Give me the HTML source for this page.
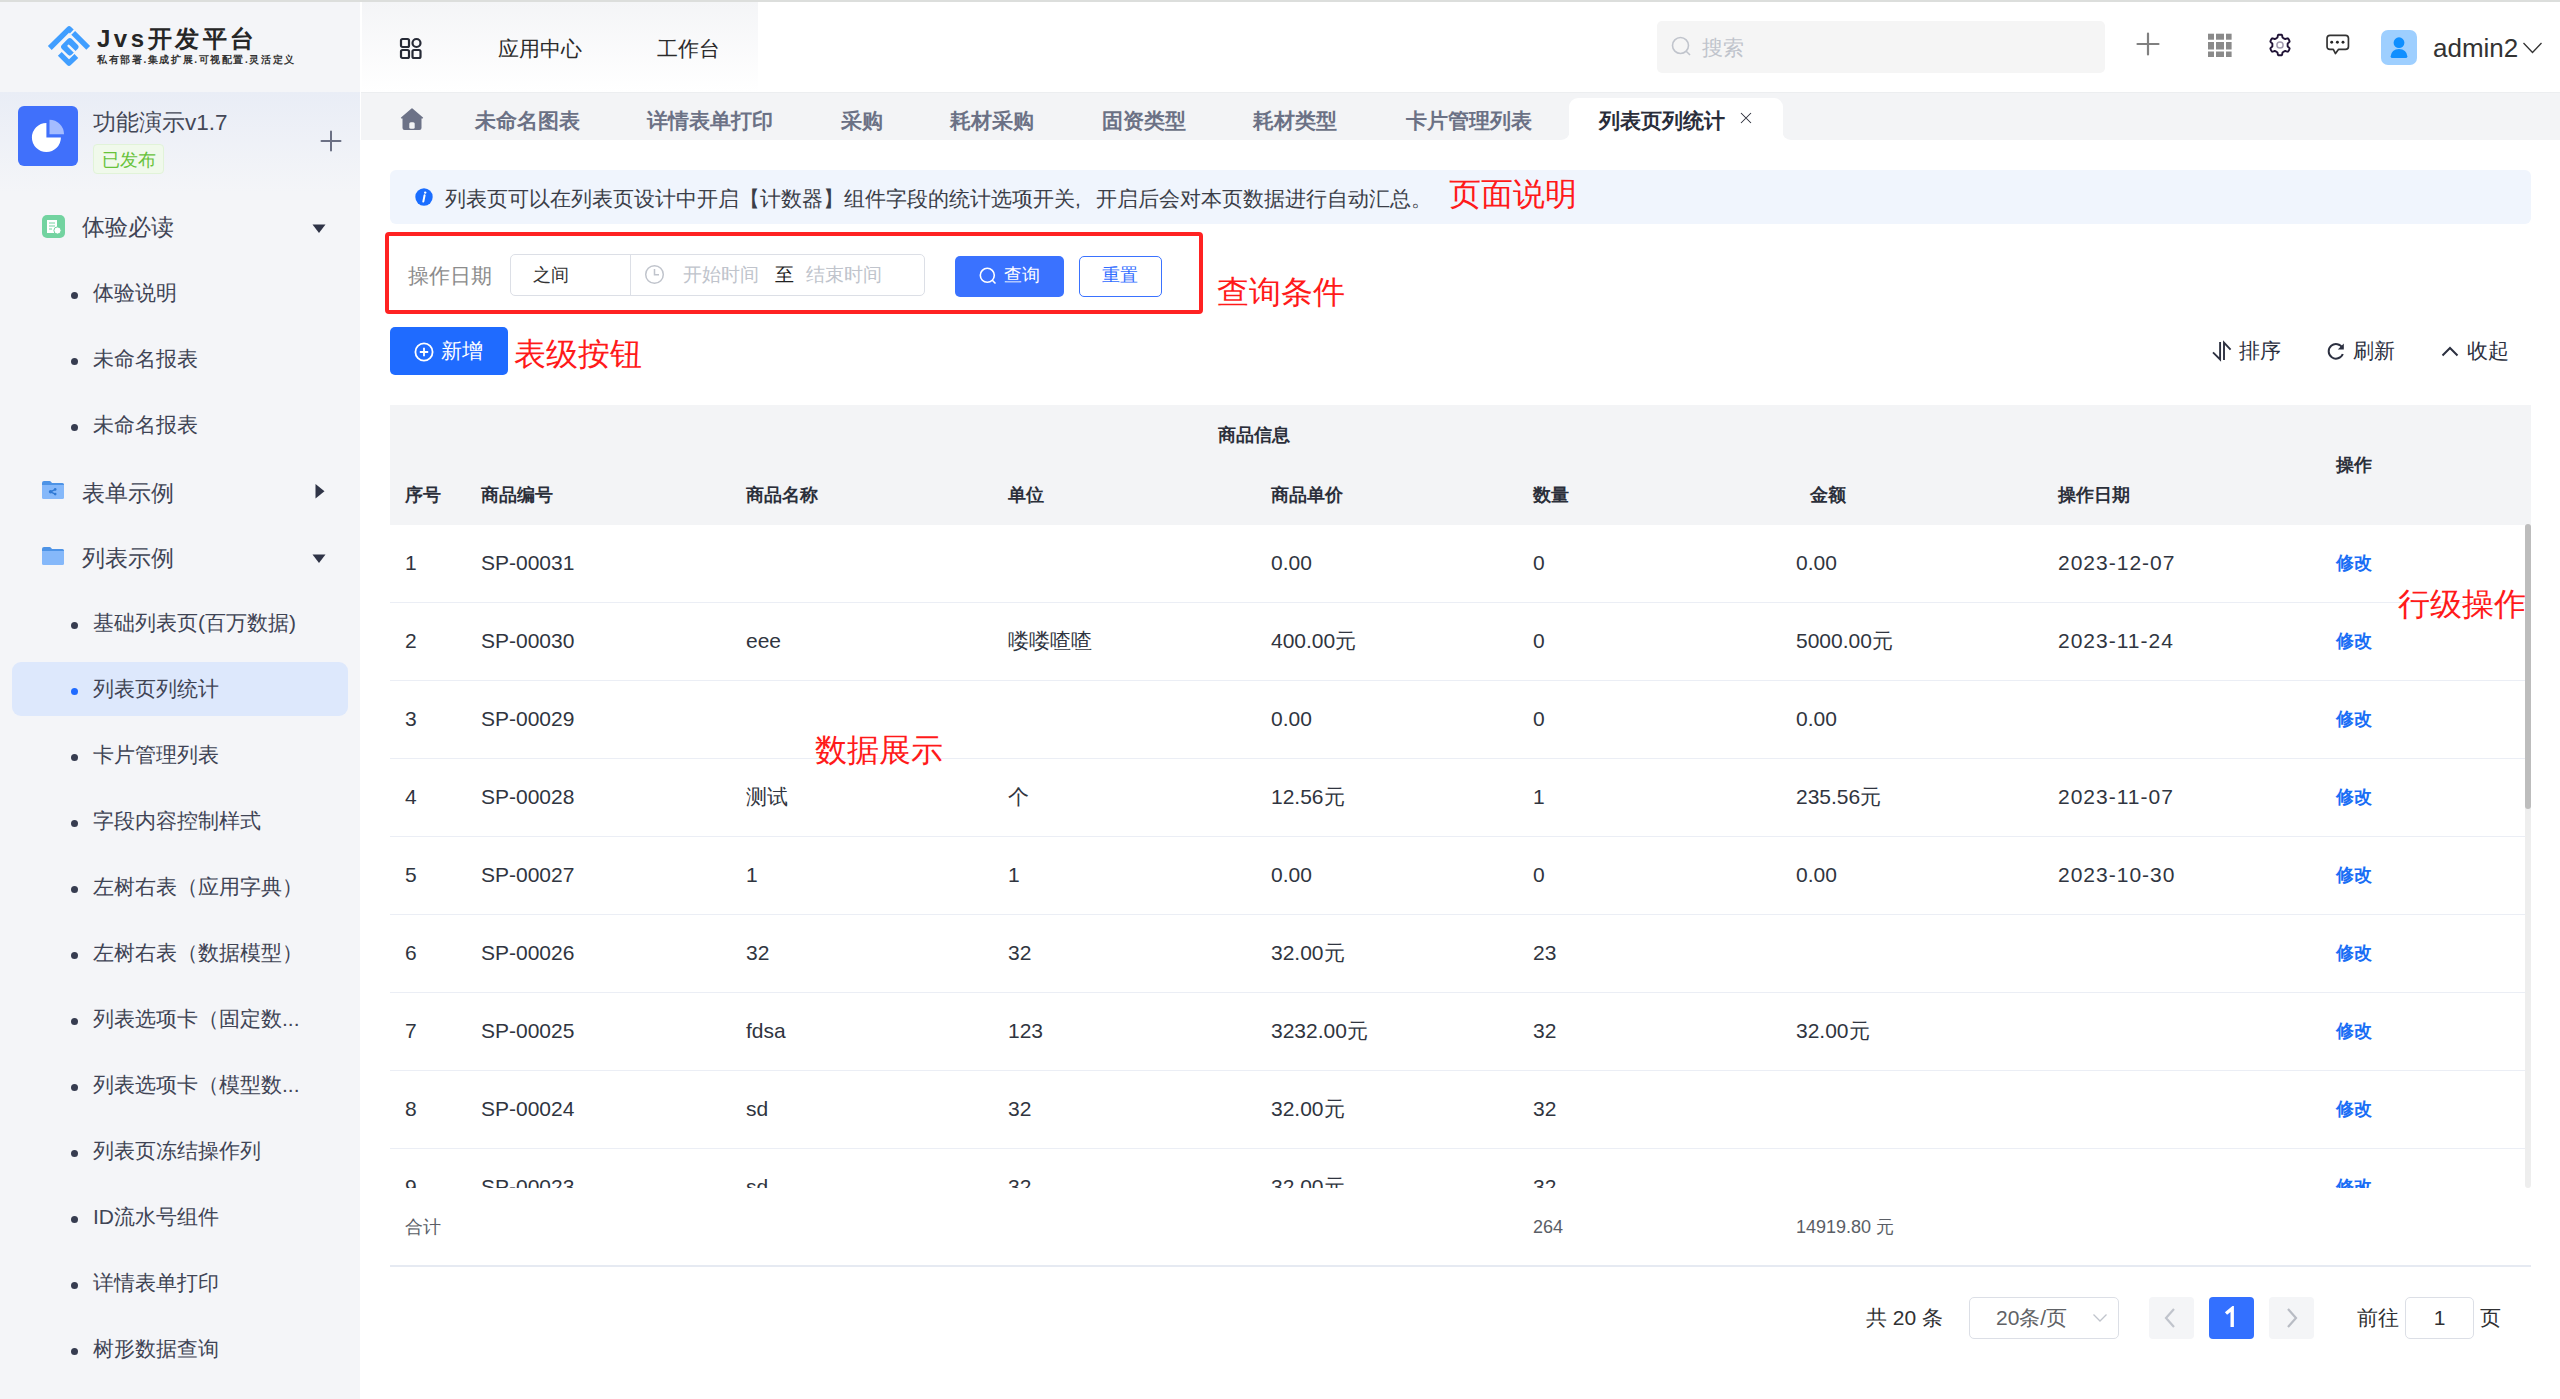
<!DOCTYPE html>
<html><head><meta charset="utf-8">
<style>
*{box-sizing:border-box;margin:0;padding:0}
html,body{width:2560px;height:1399px;overflow:hidden;background:#fff;font-family:"Liberation Sans",sans-serif;color:#303540}
.a{position:absolute;white-space:nowrap}
#topline{left:0;top:0;width:2560px;height:2px;background:#dcdedc}
#side{left:0;top:2px;width:360px;height:1397px;background:#f4f5f8}
#hdrl{left:362px;top:2px;width:396px;height:90px;background:linear-gradient(#f4f5f7,#fff)}
#appsec{left:0;top:92px;width:360px;height:100px;background:linear-gradient(180deg,#e9edf6 0%,#f4f5f8 100%)}
#tabbar{left:361px;top:92px;width:1209px;height:48px;background:#f3f4f6;border-radius:0 0 9px 0;border-top:1px solid #eceef0}
#tabbar2{left:1782px;top:92px;width:778px;height:48px;background:#f3f4f6;border-radius:0 0 0 9px;border-top:1px solid #eceef0}
.menu{font-size:21px;color:#3f4455;line-height:24px}
.grp{font-size:22.6px;color:#3f4455;line-height:26px}
.dot{width:7px;height:7px;border-radius:50%;background:#363c50}
.tab{font-size:21px;font-weight:bold;color:#6b7185;line-height:24px;top:109px}
.red{color:#ff1a1a;font-size:32px;line-height:36px}
.th{font-size:18px;font-weight:bold;color:#2b2f3a;line-height:20px}
.td{font-size:21px;color:#303540;line-height:24px}
.op{font-size:18px;font-weight:bold;color:#1a6ef5;line-height:20px}
.rowline{left:390px;width:2135px;height:1px;background:#ebeef5}
</style></head><body>
<div class="a" id="topline"></div>
<div class="a" id="side"></div>
<div class="a" id="hdrl"></div>
<div class="a" id="appsec"></div>
<div class="a" id="tabbar"></div><div class="a" id="tabbar2"></div><div class="a" style="left:1560px;top:92px;width:232px;height:16px;background:#f3f4f6;border-top:1px solid #eceef0"></div>

<!-- logo -->
<svg class="a" style="left:44px;top:20px" width="50" height="50" viewBox="0 0 50 50">
 <g fill="none" stroke-linejoin="round">
  <path d="M5.8,28 L25.1,8.8 L27.8,11.5" stroke="#409eff" stroke-width="5.4"/>
  <path d="M29.2,12.9 L44.2,27.9" stroke="#f4f5f8" stroke-width="6.8"/>
  <path d="M29.2,12.9 L44.2,27.9" stroke="#409eff" stroke-width="5.4"/>
 </g>
 <rect x="-7" y="-7" width="14" height="14" rx="3" fill="#409eff" transform="translate(25.8,26.8) rotate(45)"/>
 <path d="M24.6,25.8 L32,33.2" stroke="#f4f5f8" stroke-width="2.4" stroke-linecap="round"/>
 <g fill="none" stroke-linejoin="round">
  <path d="M15.8,33.9 L25,43.1 L32.35,35.95" stroke="#f4f5f8" stroke-width="7.8"/>
  <path d="M15.8,33.9 L25,43.1 L32.35,35.95" stroke="#409eff" stroke-width="5.4"/>
 </g>
</svg>
<div class="a" style="left:97px;top:24px;font-size:24px;font-weight:bold;letter-spacing:3.5px;color:#262626;line-height:30px">Jvs开发平台</div>
<div class="a" style="left:97px;top:53px;font-size:10px;font-weight:bold;letter-spacing:1.6px;color:#333;line-height:14px">私有部署.集成扩展.可视配置.灵活定义</div>

<!-- header left -->
<svg class="a" style="left:399px;top:37px" width="24" height="24" viewBox="0 0 24 24" fill="none" stroke="#262a36" stroke-width="2.2">
 <rect x="2" y="2" width="8" height="8" rx="1.5"/><circle cx="17.5" cy="6" r="4"/>
 <rect x="2" y="13" width="8" height="8" rx="1.5"/><rect x="13.5" y="13" width="8" height="8" rx="1.5"/>
</svg>
<div class="a" style="left:498px;top:37px;font-size:21px;color:#2b2b2b;line-height:24px">应用中心</div>
<div class="a" style="left:657px;top:37px;font-size:21px;color:#2b2b2b;line-height:24px">工作台</div>

<!-- search -->
<div class="a" style="left:1657px;top:21px;width:448px;height:52px;background:#f5f5f5;border-radius:5px"></div>
<svg class="a" style="left:1671px;top:36px" width="22" height="22" viewBox="0 0 22 22" fill="none" stroke="#c0c4cc" stroke-width="1.6"><circle cx="9.5" cy="9.5" r="8"/><path d="M15.2,15.2 L19,19"/></svg>
<div class="a" style="left:1702px;top:36px;font-size:21px;color:#c0c4cc;line-height:24px">搜索</div>

<!-- right icons -->
<svg class="a" style="left:2136px;top:32px" width="24" height="24" viewBox="0 0 24 24" stroke="#808080" stroke-width="2.2" stroke-linecap="round"><path d="M12,1.5 V22.5 M1.5,12 H22.5"/></svg>
<svg class="a" style="left:2208px;top:33px" width="24" height="24" viewBox="0 0 24 24" fill="#8a8a8a">
 <rect x="0" y="0.7" width="6" height="6"/><rect x="8" y="0.7" width="8" height="6"/><rect x="18" y="0.7" width="5.6" height="6"/>
 <rect x="0" y="9" width="6" height="7.5"/><rect x="8" y="9" width="8" height="7.5"/><rect x="18" y="9" width="5.6" height="7.5"/>
 <rect x="0" y="18.5" width="6" height="5.5"/><rect x="8" y="18.5" width="8" height="5.5"/><rect x="18" y="18.5" width="5.6" height="5.5"/>
</svg>
<svg class="a" style="left:2268px;top:33px" width="24" height="24" viewBox="0 0 24 24" fill="none"><path d="M19.6,12.0 L19.6,12.4 L19.6,12.8 L19.6,13.2 L19.8,13.7 L20.7,14.3 L21.5,15.1 L21.6,15.7 L21.4,16.2 L21.2,16.7 L21.0,17.2 L20.7,17.6 L20.4,18.1 L20.0,18.5 L19.4,18.7 L18.4,18.4 L17.4,18.0 L16.9,18.0 L16.5,18.2 L16.2,18.4 L15.8,18.6 L15.5,18.8 L15.1,19.0 L14.8,19.2 L14.5,19.6 L14.3,20.7 L14.1,21.8 L13.6,22.2 L13.1,22.3 L12.5,22.3 L12.0,22.4 L11.5,22.3 L10.9,22.3 L10.4,22.2 L9.9,21.8 L9.7,20.7 L9.5,19.6 L9.2,19.2 L8.9,19.0 L8.5,18.8 L8.2,18.6 L7.8,18.4 L7.5,18.2 L7.1,18.0 L6.6,18.0 L5.6,18.4 L4.6,18.7 L4.0,18.5 L3.6,18.1 L3.3,17.6 L3.0,17.2 L2.8,16.7 L2.6,16.2 L2.4,15.7 L2.5,15.1 L3.3,14.3 L4.2,13.7 L4.4,13.2 L4.4,12.8 L4.4,12.4 L4.3,12.0 L4.4,11.6 L4.4,11.2 L4.4,10.8 L4.2,10.3 L3.3,9.7 L2.5,8.9 L2.4,8.3 L2.6,7.8 L2.8,7.3 L3.0,6.8 L3.3,6.4 L3.6,5.9 L4.0,5.5 L4.6,5.3 L5.6,5.6 L6.6,6.0 L7.1,6.0 L7.5,5.8 L7.8,5.6 L8.2,5.4 L8.5,5.2 L8.9,5.0 L9.2,4.8 L9.5,4.4 L9.7,3.3 L9.9,2.2 L10.4,1.8 L10.9,1.7 L11.5,1.7 L12.0,1.7 L12.5,1.7 L13.1,1.7 L13.6,1.8 L14.1,2.2 L14.3,3.3 L14.5,4.4 L14.8,4.8 L15.1,5.0 L15.5,5.2 L15.8,5.4 L16.2,5.6 L16.5,5.8 L16.9,6.0 L17.4,6.0 L18.4,5.6 L19.4,5.3 L20.0,5.5 L20.4,5.9 L20.7,6.4 L21.0,6.8 L21.2,7.3 L21.4,7.8 L21.6,8.3 L21.5,8.9 L20.7,9.7 L19.8,10.3 L19.6,10.8 L19.6,11.2 L19.6,11.6Z" stroke="#1f1235" stroke-width="1.9" stroke-linejoin="round"/><circle cx="12" cy="12" r="3.1" stroke="#a39cb0" stroke-width="1.5"/></svg>
<svg class="a" style="left:2325px;top:33px" width="26" height="24" viewBox="0 0 26 24" fill="none">
 <path d="M5,2.35 H20.5 Q23.45,2.35 23.45,5.3 V13.4 Q23.45,16.35 20.5,16.35 H13.6 L10.5,20.6 L8.3,16.35 H5 Q2.05,16.35 2.05,13.4 V5.3 Q2.05,2.35 5,2.35 Z" stroke="#333" stroke-width="1.7" stroke-linejoin="round"/>
 <circle cx="6.7" cy="9.2" r="1.45" fill="#262626"/><circle cx="12.4" cy="9.2" r="1.45" fill="#262626"/><circle cx="18" cy="9.2" r="1.45" fill="#262626"/>
</svg>
<div class="a" style="left:2381px;top:30px;width:36px;height:35px;background:#9ecfff;border-radius:7px"></div>
<svg class="a" style="left:2388px;top:36px" width="22" height="24" viewBox="0 0 22 24" fill="#0f8fff"><circle cx="11" cy="6.7" r="5.4"/><path d="M2.6,20.5 Q3.5,13 11,13 Q18.5,13 19.4,20.5 Q19.4,22 17.5,22 H4.5 Q2.6,22 2.6,20.5 Z"/></svg>
<div class="a" style="left:2433px;top:33px;font-size:26px;color:#333;line-height:30px">admin2</div>
<svg class="a" style="left:2521px;top:40px" width="24" height="16" viewBox="0 0 24 16" fill="none" stroke="#333" stroke-width="1.3"><path d="M2.5,3 L11.5,12.5 L20.5,3"/></svg>

<!-- app section -->
<div class="a" style="left:18px;top:106px;width:60px;height:60px;background:#4070fb;border-radius:6px"></div>
<svg class="a" style="left:18px;top:106px" width="60" height="60" viewBox="0 0 60 60">
 <path d="M28.4,16.9 A14.5,14.5 0 1 0 42.9,31.4 L28.4,31.4 Z" fill="#fff"/>
 <path d="M31.5,13.8 A14.5,14.5 0 0 1 46,28.3 L31.5,28.3 Z" fill="#a4bcff"/>
</svg>
<div class="a" style="left:93px;top:110px;font-size:22.5px;color:#444857;line-height:26px">功能演示v1.7</div>
<div class="a" style="left:93px;top:144px;width:71px;height:30px;background:#f0f9eb;border:1px solid #e1f3d8;border-radius:4px"></div>
<div class="a" style="left:102px;top:148px;font-size:18px;color:#67c23a;line-height:24px">已发布</div>
<svg class="a" style="left:320px;top:130px" width="22" height="22" viewBox="0 0 22 22" stroke="#6b7084" stroke-width="2" stroke-linecap="round"><path d="M11,1.5 V20.5 M1.5,11 H20.5"/></svg>

<!-- menu -->
<div class="a" style="left:42px;top:215px;width:23px;height:23px;background:#72d3a0;border-radius:5px"></div>
<svg class="a" style="left:42px;top:215px" width="23" height="23" viewBox="0 0 23 23"><rect x="5" y="5" width="10" height="13" fill="#fff"/><path d="M7,8 H13 M7,11 H13 M7,14 H10" stroke="#72d3a0" stroke-width="1"/><circle cx="15.5" cy="15.5" r="3.6" fill="#fff" stroke="#72d3a0" stroke-width="1"/></svg>
<div class="a grp" style="left:82px;top:215px">体验必读</div>
<svg class="a" style="left:311px;top:223px" width="16" height="12" viewBox="0 0 16 12"><path d="M1.5,1.5 H14.5 L8,10 Z" fill="#2f3447"/></svg>

<div class="a dot" style="left:71px;top:292px"></div><div class="a menu" style="left:93px;top:281px">体验说明</div>
<div class="a dot" style="left:71px;top:358px"></div><div class="a menu" style="left:93px;top:347px">未命名报表</div>
<div class="a dot" style="left:71px;top:424px"></div><div class="a menu" style="left:93px;top:413px">未命名报表</div>

<svg class="a" style="left:41px;top:480px" width="24" height="20" viewBox="0 0 24 20"><path d="M1,3 Q1,1 3,1 H8.5 Q9.5,1 10.2,2 L11,3 H21.5 Q23,3 23,4.5 V7 H1 Z" fill="#4d93e6"/><path d="M1,5 H23 V17.5 Q23,19 21.5,19 H2.5 Q1,19 1,17.5 Z" fill="#85b8fa"/><path d="M9.6,11.8 L14.2,9.4 M9.6,11.8 L14.2,14.1" stroke="#3079d4" stroke-width="1.3"/><circle cx="9.6" cy="11.8" r="1.8" fill="#3079d4"/><circle cx="14.2" cy="9.4" r="1.3" fill="#3079d4"/><circle cx="14.2" cy="14.1" r="1.3" fill="#3079d4"/></svg>
<div class="a grp" style="left:82px;top:481px">表单示例</div>
<svg class="a" style="left:313px;top:483px" width="14" height="18" viewBox="0 0 14 18"><path d="M2.5,1 V15.5 L11.5,8.2 Z" fill="#2f3447"/></svg>

<svg class="a" style="left:41px;top:546px" width="24" height="20" viewBox="0 0 24 20"><path d="M1,3 Q1,1 3,1 H8.5 Q9.5,1 10.2,2 L11,3 H21.5 Q23,3 23,4.5 V7 H1 Z" fill="#4d93e6"/><path d="M1,5 H23 V17.5 Q23,19 21.5,19 H2.5 Q1,19 1,17.5 Z" fill="#85b8fa"/></svg>
<div class="a grp" style="left:82px;top:546px">列表示例</div>
<svg class="a" style="left:311px;top:553px" width="16" height="12" viewBox="0 0 16 12"><path d="M1.5,1.5 H14.5 L8,10 Z" fill="#2f3447"/></svg>

<div class="a dot" style="left:71px;top:622px"></div><div class="a menu" style="left:93px;top:611px">基础列表页(百万数据)</div>
<div class="a" style="left:12px;top:662px;width:336px;height:54px;background:#dde8fc;border-radius:9px"></div>
<div class="a dot" style="left:71px;top:688px;background:#1f6bff"></div><div class="a menu" style="left:93px;top:677px">列表页列统计</div>
<div class="a dot" style="left:71px;top:754px"></div><div class="a menu" style="left:93px;top:743px">卡片管理列表</div>
<div class="a dot" style="left:71px;top:820px"></div><div class="a menu" style="left:93px;top:809px">字段内容控制样式</div>
<div class="a dot" style="left:71px;top:886px"></div><div class="a menu" style="left:93px;top:875px">左树右表（应用字典）</div>
<div class="a dot" style="left:71px;top:952px"></div><div class="a menu" style="left:93px;top:941px">左树右表（数据模型）</div>
<div class="a dot" style="left:71px;top:1018px"></div><div class="a menu" style="left:93px;top:1007px">列表选项卡（固定数...</div>
<div class="a dot" style="left:71px;top:1084px"></div><div class="a menu" style="left:93px;top:1073px">列表选项卡（模型数...</div>
<div class="a dot" style="left:71px;top:1150px"></div><div class="a menu" style="left:93px;top:1139px">列表页冻结操作列</div>
<div class="a dot" style="left:71px;top:1216px"></div><div class="a menu" style="left:93px;top:1205px">ID流水号组件</div>
<div class="a dot" style="left:71px;top:1282px"></div><div class="a menu" style="left:93px;top:1271px">详情表单打印</div>
<div class="a dot" style="left:71px;top:1348px"></div><div class="a menu" style="left:93px;top:1337px">树形数据查询</div>

<!-- tabs -->
<svg class="a" style="left:399px;top:107px" width="26" height="24" viewBox="0 0 26 24"><path d="M12.5,1.5 Q13,1.2 13.5,1.5 L24,10.5 Q24.5,11.2 23.6,11.5 H22.5 V21 Q22.5,23 20.5,23 H5.5 Q3.5,23 3.5,21 V11.5 H2.4 Q1.5,11.2 2,10.5 Z" fill="#6c7287"/><rect x="10.3" y="15.2" width="5.4" height="6.6" rx="1.5" fill="#f3f4f6"/></svg>
<div class="a tab" style="left:475px">未命名图表</div>
<div class="a tab" style="left:647px">详情表单打印</div>
<div class="a tab" style="left:841px">采购</div>
<div class="a tab" style="left:950px">耗材采购</div>
<div class="a tab" style="left:1102px">固资类型</div>
<div class="a tab" style="left:1253px">耗材类型</div>
<div class="a tab" style="left:1406px">卡片管理列表</div>
<div class="a" style="left:1569px;top:98px;width:214px;height:42px;background:#fff;border-radius:9px 9px 0 0"></div>
<div class="a tab" style="left:1599px;color:#2a2d3a">列表页列统计</div>
<svg class="a" style="left:1739px;top:111px" width="14" height="14" viewBox="0 0 14 14" stroke="#2a2d3a" stroke-width="1.05"><path d="M2,2 L12,12 M12,2 L2,12"/></svg>

<!-- alert -->
<div class="a" style="left:390px;top:170px;width:2141px;height:54px;background:#f0f5fd;border-radius:6px"></div>
<svg class="a" style="left:414px;top:187px" width="20" height="20" viewBox="0 0 20 20"><circle cx="10" cy="10" r="8.7" fill="#1a6dff"/><path d="M10.6,8.3 L9.3,14.6" stroke="#fff" stroke-width="2" stroke-linecap="round"/><circle cx="11.2" cy="5.6" r="1.2" fill="#fff"/></svg>
<div class="a" style="left:445px;top:187px;font-size:21px;color:#3b3e48;line-height:24px">列表页可以在列表页设计中开启【计数器】组件字段的统计选项开关<span style="display:inline-block;width:21px">,</span>开启后会对本页数据进行自动汇总。</div>
<div class="a red" style="left:1449px;top:176px">页面说明</div>

<!-- query -->
<div class="a" style="left:385px;top:232px;width:818px;height:82px;border:4px solid #ff2222;border-radius:4px"></div>
<div class="a" style="left:408px;top:264px;font-size:21px;color:#8c8c8c;line-height:24px">操作日期</div>
<div class="a" style="left:510px;top:254px;width:415px;height:42px;border:1px solid #dcdfe6;border-radius:5px"></div>
<div class="a" style="left:630px;top:255px;width:1px;height:40px;background:#dcdfe6"></div>
<div class="a" style="left:533px;top:264px;font-size:18px;color:#333;line-height:22px">之间</div>
<svg class="a" style="left:644px;top:264px" width="21" height="21" viewBox="0 0 21 21" fill="none" stroke="#c0c4cc" stroke-width="1.5"><circle cx="10.5" cy="10.5" r="8.8"/><path d="M10.5,5 V10.8 H15"/></svg>
<div class="a" style="left:683px;top:264px;font-size:18.5px;color:#c0c4cc;line-height:22px">开始时间</div>
<div class="a" style="left:775px;top:264px;font-size:18.5px;color:#222;line-height:22px">至</div>
<div class="a" style="left:806px;top:264px;font-size:18.5px;color:#c0c4cc;line-height:22px">结束时间</div>
<div class="a" style="left:955px;top:256px;width:109px;height:41px;background:#3a72ff;border-radius:5px"></div>
<svg class="a" style="left:978px;top:266px" width="20" height="20" viewBox="0 0 20 20" fill="none" stroke="#fff" stroke-width="1.6"><circle cx="9.3" cy="9.3" r="7"/><path d="M14.3,14.3 L17.5,17.5"/></svg>
<div class="a" style="left:1004px;top:264px;font-size:18px;color:#fff;line-height:22px">查询</div>
<div class="a" style="left:1079px;top:256px;width:83px;height:41px;border:1.5px solid #3a72ff;border-radius:5px"></div>
<div class="a" style="left:1102px;top:264px;font-size:18px;color:#2f6bff;line-height:22px">重置</div>
<div class="a red" style="left:1217px;top:274px">查询条件</div>

<!-- toolbar -->
<div class="a" style="left:390px;top:327px;width:118px;height:48px;background:#1f6bff;border-radius:5px"></div>
<svg class="a" style="left:413px;top:341px" width="22" height="22" viewBox="0 0 22 22" fill="none" stroke="#fff" stroke-width="1.8"><circle cx="11" cy="11" r="8.6"/><path d="M11,6.8 V15.2 M6.8,11 H15.2"/></svg>
<div class="a" style="left:441px;top:339px;font-size:21px;color:#fff;line-height:24px">新增</div>
<div class="a red" style="left:514px;top:336px">表级按钮</div>

<svg class="a" style="left:2211px;top:340px" width="22" height="22" viewBox="0 0 22 22" fill="none" stroke="#2c3040" stroke-width="1.9"><path d="M9.1,2 V19.4 L2,12.3 M13,20 V2.6 L19.6,9.6"/></svg>
<div class="a" style="left:2239px;top:339px;font-size:21px;color:#2c3040;line-height:24px">排序</div>
<svg class="a" style="left:2326px;top:340px" width="20" height="22" viewBox="0 0 20 22" fill="none"><path d="M16.5,8 A7.3,7.3 0 1 0 16.8,14" stroke="#2c3040" stroke-width="2"/><path d="M17.8,3.5 V9.5 H11.8 Z" fill="#2c3040"/></svg>
<div class="a" style="left:2353px;top:339px;font-size:21px;color:#2c3040;line-height:24px">刷新</div>
<svg class="a" style="left:2440px;top:345px" width="20" height="14" viewBox="0 0 20 14" fill="none" stroke="#2c3040" stroke-width="2"><path d="M2.5,10.5 L10,3 L17.5,10.5"/></svg>
<div class="a" style="left:2467px;top:339px;font-size:21px;color:#2c3040;line-height:24px">收起</div>

<!-- table header -->
<div class="a" style="left:390px;top:405px;width:2141px;height:120px;background:#f3f4f6"></div>
<div class="a th" style="left:1218px;top:425px">商品信息</div>
<div class="a th" style="left:405px;top:485px">序号</div>
<div class="a th" style="left:481px;top:485px">商品编号</div>
<div class="a th" style="left:746px;top:485px">商品名称</div>
<div class="a th" style="left:1008px;top:485px">单位</div>
<div class="a th" style="left:1271px;top:485px">商品单价</div>
<div class="a th" style="left:1533px;top:485px">数量</div>
<div class="a th" style="left:1810px;top:485px">金额</div>
<div class="a th" style="left:2058px;top:485px">操作日期</div>
<div class="a th" style="left:2336px;top:455px">操作</div>

<!-- table body -->
<div id="tbody" class="a" style="left:390px;top:525px;width:2135px;height:663px;overflow:hidden">
<div class="a td" style="left:15px;top:26px">1</div>
<div class="a td" style="left:91px;top:26px">SP-00031</div>
<div class="a td" style="left:881px;top:26px">0.00</div>
<div class="a td" style="left:1143px;top:26px">0</div>
<div class="a td" style="left:1406px;top:26px">0.00</div>
<div class="a td" style="left:1668px;top:26px;letter-spacing:1px">2023-12-07</div>
<div class="a op" style="left:1946px;top:28px">修改</div>
<div class="a rowline" style="left:0;top:77px"></div>
<div class="a td" style="left:15px;top:104px">2</div>
<div class="a td" style="left:91px;top:104px">SP-00030</div>
<div class="a td" style="left:356px;top:104px">eee</div>
<div class="a td" style="left:618px;top:104px">喽喽喳喳</div>
<div class="a td" style="left:881px;top:104px">400.00元</div>
<div class="a td" style="left:1143px;top:104px">0</div>
<div class="a td" style="left:1406px;top:104px">5000.00元</div>
<div class="a td" style="left:1668px;top:104px;letter-spacing:1px">2023-11-24</div>
<div class="a op" style="left:1946px;top:106px">修改</div>
<div class="a rowline" style="left:0;top:155px"></div>
<div class="a td" style="left:15px;top:182px">3</div>
<div class="a td" style="left:91px;top:182px">SP-00029</div>
<div class="a td" style="left:881px;top:182px">0.00</div>
<div class="a td" style="left:1143px;top:182px">0</div>
<div class="a td" style="left:1406px;top:182px">0.00</div>
<div class="a op" style="left:1946px;top:184px">修改</div>
<div class="a rowline" style="left:0;top:233px"></div>
<div class="a td" style="left:15px;top:260px">4</div>
<div class="a td" style="left:91px;top:260px">SP-00028</div>
<div class="a td" style="left:356px;top:260px">测试</div>
<div class="a td" style="left:618px;top:260px">个</div>
<div class="a td" style="left:881px;top:260px">12.56元</div>
<div class="a td" style="left:1143px;top:260px">1</div>
<div class="a td" style="left:1406px;top:260px">235.56元</div>
<div class="a td" style="left:1668px;top:260px;letter-spacing:1px">2023-11-07</div>
<div class="a op" style="left:1946px;top:262px">修改</div>
<div class="a rowline" style="left:0;top:311px"></div>
<div class="a td" style="left:15px;top:338px">5</div>
<div class="a td" style="left:91px;top:338px">SP-00027</div>
<div class="a td" style="left:356px;top:338px">1</div>
<div class="a td" style="left:618px;top:338px">1</div>
<div class="a td" style="left:881px;top:338px">0.00</div>
<div class="a td" style="left:1143px;top:338px">0</div>
<div class="a td" style="left:1406px;top:338px">0.00</div>
<div class="a td" style="left:1668px;top:338px;letter-spacing:1px">2023-10-30</div>
<div class="a op" style="left:1946px;top:340px">修改</div>
<div class="a rowline" style="left:0;top:389px"></div>
<div class="a td" style="left:15px;top:416px">6</div>
<div class="a td" style="left:91px;top:416px">SP-00026</div>
<div class="a td" style="left:356px;top:416px">32</div>
<div class="a td" style="left:618px;top:416px">32</div>
<div class="a td" style="left:881px;top:416px">32.00元</div>
<div class="a td" style="left:1143px;top:416px">23</div>
<div class="a op" style="left:1946px;top:418px">修改</div>
<div class="a rowline" style="left:0;top:467px"></div>
<div class="a td" style="left:15px;top:494px">7</div>
<div class="a td" style="left:91px;top:494px">SP-00025</div>
<div class="a td" style="left:356px;top:494px">fdsa</div>
<div class="a td" style="left:618px;top:494px">123</div>
<div class="a td" style="left:881px;top:494px">3232.00元</div>
<div class="a td" style="left:1143px;top:494px">32</div>
<div class="a td" style="left:1406px;top:494px">32.00元</div>
<div class="a op" style="left:1946px;top:496px">修改</div>
<div class="a rowline" style="left:0;top:545px"></div>
<div class="a td" style="left:15px;top:572px">8</div>
<div class="a td" style="left:91px;top:572px">SP-00024</div>
<div class="a td" style="left:356px;top:572px">sd</div>
<div class="a td" style="left:618px;top:572px">32</div>
<div class="a td" style="left:881px;top:572px">32.00元</div>
<div class="a td" style="left:1143px;top:572px">32</div>
<div class="a op" style="left:1946px;top:574px">修改</div>
<div class="a rowline" style="left:0;top:623px"></div>
<div class="a td" style="left:15px;top:650px">9</div>
<div class="a td" style="left:91px;top:650px">SP-00023</div>
<div class="a td" style="left:356px;top:650px">sd</div>
<div class="a td" style="left:618px;top:650px">32</div>
<div class="a td" style="left:881px;top:650px">32.00元</div>
<div class="a td" style="left:1143px;top:650px">32</div>
<div class="a op" style="left:1946px;top:652px">修改</div>
<div class="a rowline" style="left:0;top:701px"></div>
</div>

<!-- scrollbar -->
<div class="a" style="left:2525px;top:525px;width:6px;height:663px;background:#eeeeee;border-radius:0 0 3px 3px"></div>
<div class="a" style="left:2525px;top:524px;width:6px;height:285px;background:#bdbdbd;border-radius:3px"></div>

<div class="a red" style="left:815px;top:732px">数据展示</div>
<div class="a red" style="left:2398px;top:586px;width:127px;overflow:hidden">行级操作</div>

<!-- summary -->
<div class="a" style="left:405px;top:1216px;font-size:18px;color:#5a5e66;line-height:22px">合计</div>
<div class="a" style="left:1533px;top:1216px;font-size:18px;color:#5a5e66;line-height:22px">264</div>
<div class="a" style="left:1796px;top:1216px;font-size:18px;color:#5a5e66;line-height:22px">14919.80 元</div>
<div class="a" style="left:390px;top:1265px;width:2141px;height:2px;background:#e6eaf2"></div>

<!-- pagination -->
<div class="a" style="left:1866px;top:1306px;font-size:21px;color:#303133;line-height:24px">共 20 条</div>
<div class="a" style="left:1969px;top:1297px;width:150px;height:42px;border:1px solid #dcdfe6;border-radius:5px"></div>
<div class="a" style="left:1996px;top:1306px;font-size:21px;color:#606266;line-height:24px">20条/页</div>
<svg class="a" style="left:2092px;top:1312px" width="16" height="12" viewBox="0 0 16 12" fill="none" stroke="#c0c4cc" stroke-width="1.3"><path d="M1.5,2.5 L8,9 L14.5,2.5"/></svg>
<div class="a" style="left:2149px;top:1297px;width:45px;height:42px;background:#f4f5f7;border-radius:4px"></div>
<svg class="a" style="left:2162px;top:1307px" width="16" height="22" viewBox="0 0 16 22" fill="none" stroke="#c0c4cc" stroke-width="2.2"><path d="M12,2 L4,11 L12,20"/></svg>
<div class="a" style="left:2209px;top:1297px;width:45px;height:42px;background:#3370ff;border-radius:4px"></div>
<svg class="a" style="left:2224px;top:1306px" width="14" height="22" viewBox="0 0 14 22" fill="none" stroke="#fff" stroke-width="3.4"><path d="M2,7.5 L8.2,2.4 V21"/></svg>
<div class="a" style="left:2269px;top:1297px;width:45px;height:42px;background:#f4f5f7;border-radius:4px"></div>
<svg class="a" style="left:2284px;top:1307px" width="16" height="22" viewBox="0 0 16 22" fill="none" stroke="#b8bcc4" stroke-width="2.2"><path d="M4,2 L12,11 L4,20"/></svg>
<div class="a" style="left:2357px;top:1306px;font-size:21px;color:#303133;line-height:24px">前往</div>
<div class="a" style="left:2405px;top:1297px;width:69px;height:42px;border:1px solid #dcdfe6;border-radius:5px"></div>
<div class="a" style="left:2405px;top:1306px;width:69px;text-align:center;font-size:21px;color:#303133;line-height:24px">1</div>
<div class="a" style="left:2480px;top:1306px;font-size:21px;color:#303133;line-height:24px">页</div>

</body></html>
